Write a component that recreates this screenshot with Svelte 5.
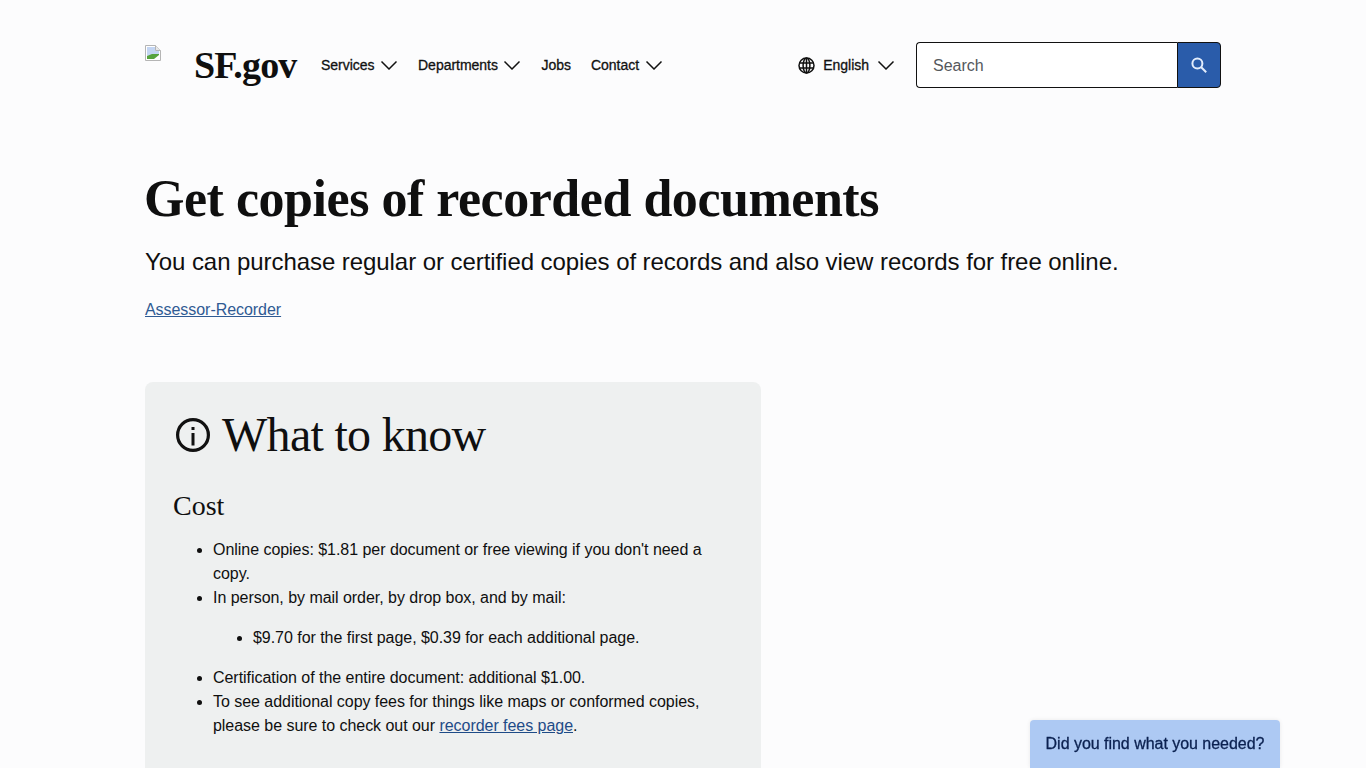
<script>
  const navItems = [
    { label: 'Services', caret: true },
    { label: 'Departments', caret: true },
    { label: 'Jobs', caret: false },
    { label: 'Contact', caret: true }
  ];
</script>

<div class="page">
  <header class="header">
    <a class="brand" href="#top">
      <span class="logo">
        <svg width="16" height="16" viewBox="0 0 16 16" aria-hidden="true">
          <path d="M0.5 0.5H10.5L15.5 5.5V15.5H0.5Z" fill="#fff" stroke="#b5b5b5" />
          <path d="M10.5 0.5V5.5H15.5" fill="#e8e8e8" stroke="#b5b5b5" />
          <path d="M2 2H10V6H14V9L2 11Z" fill="#c3d5f3" />
          <path d="M2 14V11L7 9L14 9V10L9 14Z" fill="#56a33e" />
        </svg>
      </span>
      <span class="wordmark">SF.gov</span>
    </a>
    <nav class="nav">
      {#each navItems as item}
        <a class="nav-item" href="#top">
          {item.label}
          {#if item.caret}
            <svg class="caret" width="18" height="10" viewBox="0 0 18 10" aria-hidden="true">
              <path d="M1.5 1.5L9 9L16.5 1.5" fill="none" stroke="#111" stroke-width="1.5" />
            </svg>
          {/if}
        </a>
      {/each}
    </nav>
    <div class="tools">
      <button class="lang" type="button">
        <svg width="17" height="17" viewBox="0 0 17 17" aria-hidden="true">
          <g fill="none" stroke="#111" stroke-width="1.5">
            <circle cx="8.5" cy="8.5" r="7.5" />
            <ellipse cx="8.5" cy="8.5" rx="3.4" ry="7.5" />
            <path d="M1 6H16M1 11H16M8.5 1V16" />
          </g>
        </svg>
        <span>English</span>
        <svg class="caret-lang" width="18" height="10" viewBox="0 0 18 10" aria-hidden="true">
          <path d="M1.5 1.5L9 9L16.5 1.5" fill="none" stroke="#111" stroke-width="1.5" />
        </svg>
      </button>
      <form class="search">
        <input class="search-input" type="text" placeholder="Search" />
        <button class="search-btn" type="button" aria-label="Search">
          <svg width="16" height="16" viewBox="0 0 16 16" aria-hidden="true">
            <circle cx="6.4" cy="6.4" r="5" fill="none" stroke="#e3edfc" stroke-width="2" />
            <path d="M10 10L15.2 15.2" stroke="#e3edfc" stroke-width="2" />
          </svg>
        </button>
      </form>
    </div>
  </header>

  <main class="main">
    <h1 class="title">Get copies of recorded documents</h1>
    <p class="lead">You can purchase regular or certified copies of records and also view records for free online.</p>
    <a class="dept" href="#top">Assessor-Recorder</a>

    <section class="card">
      <h2 class="card-title">
        <svg class="info" width="36" height="36" viewBox="0 0 36 36" aria-hidden="true">
          <circle cx="18" cy="18" r="15.4" fill="none" stroke="#111" stroke-width="3.2" />
          <rect x="16.5" y="16" width="3" height="12.5" fill="#111" />
          <rect x="16.5" y="10" width="3" height="3" fill="#111" />
        </svg>
        <span>What to know</span>
      </h2>
      <h3 class="card-sub">Cost</h3>
      <ul class="list">
        <li>Online copies: $1.81 per document or free viewing if you don't need a copy.</li>
        <li>In person, by mail order, by drop box, and by mail:
          <ul class="list nested">
            <li>$9.70 for the first page, $0.39 for each additional page.</li>
          </ul>
        </li>
        <li>Certification of the entire document: additional $1.00.</li>
        <li>To see additional copy fees for things like maps or conformed copies, please be sure to check out our <a href="#top">recorder fees page</a>.</li>
      </ul>
    </section>
  </main>

  <button class="feedback" type="button">Did you find what you needed?</button>
</div>

<style>
  :global(body) {
    margin: 0;
    background: #fcfcfd;
    color: #0f0f0f;
    font-family: "Liberation Sans", Arial, sans-serif;
  }
  :global(html) { overflow: hidden; }

  .page {
    width: 1076px;
    margin: 0 auto;
  }
  .header {
    display: flex;
    align-items: center;
    height: 130px;
    box-sizing: border-box;
  }
  .brand {
    display: flex;
    align-items: center;
    color: inherit;
    text-decoration: none;
    width: 176px;
  }
  .logo {
    width: 49px;
    height: 40px;
    flex: none;
  }
  .logo svg { display: block; }
  .wordmark {
    font-family: "Liberation Serif", "Times New Roman", serif;
    font-weight: 700;
    font-size: 38px;
    line-height: 44px;
    letter-spacing: -0.8px;
    white-space: nowrap;
  }
  .nav {
    display: flex;
    align-items: center;
    gap: 20px;
  }
  .nav-item, .lang {
    display: flex;
    align-items: center;
    gap: 5.5px;
    color: #111;
    text-decoration: none;
    font-size: 14px;
    letter-spacing: -0.02px;
    -webkit-text-stroke: 0.3px #111;
    white-space: nowrap;
  }
  .tools {
    margin-left: auto;
    display: flex;
    align-items: center;
    gap: 21px;
  }
  .lang {
    border: 0;
    background: none;
    padding: 0;
    font-family: inherit;
    gap: 0;
  }
  .lang span { margin-left: 8px; }
  .caret-lang { margin-left: 8px; }
  .search {
    display: flex;
    width: 305px;
    height: 46px;
    margin: 0;
  }
  .search-input {
    flex: 1;
    min-width: 0;
    box-sizing: border-box;
    border: 1px solid #111;
    border-right: 0;
    border-radius: 4px 0 0 4px;
    background: #fff;
    padding: 2px 16px 0;
    font: 16px "Liberation Sans", Arial, sans-serif;
    outline: none;
  }
  .search-input::placeholder { color: #55585d; opacity: 1; }
  .search-btn {
    width: 44px;
    box-sizing: border-box;
    border: 1px solid #111;
    border-radius: 0 4px 4px 0;
    background: #2a5caa;
    display: flex;
    align-items: center;
    justify-content: center;
    padding: 0;
  }

  .main { padding-top: 40px; }
  .title {
    margin: 0 0 0 -1px;
    font-family: "Liberation Serif", "Times New Roman", serif;
    font-weight: 700;
    font-size: 52px;
    line-height: 58px;
    letter-spacing: -0.47px;
    white-space: nowrap;
  }
  .lead {
    margin: 18px 0 0;
    font-size: 24px;
    line-height: 32px;
    letter-spacing: -0.065px;
  }
  .dept {
    display: block;
    width: max-content;
    margin-top: 20px;
    color: #2f5a93;
    font-size: 16px;
    line-height: 24px;
    letter-spacing: -0.05px;
  }
  .card {
    width: 616px;
    box-sizing: border-box;
    margin-top: 60px;
    padding: 24px 28px 40px;
    background: #eef0f0;
    border-radius: 8px;
  }
  .card-title {
    display: flex;
    align-items: center;
    gap: 11px;
    margin: 0;
    font-family: "Liberation Serif", "Times New Roman", serif;
    font-weight: 400;
    font-size: 48px;
    line-height: 58px;
    letter-spacing: -0.7px;
  }
  .info { margin-left: 2px; }
  .card-sub {
    margin: 24px 0 0;
    font-family: "Liberation Serif", "Times New Roman", serif;
    font-weight: 400;
    font-size: 28px;
    line-height: 36px;
  }
  .list {
    margin: 14px 0 16px;
    padding-left: 40px;
    font-size: 16px;
    line-height: 24px;
    letter-spacing: -0.04px;
    list-style: disc;
  }
  .nested { margin: 16px 0; }
  .list a { color: #1e4b87; }
  .feedback {
    position: fixed;
    right: 86px;
    bottom: 0;
    width: 250px;
    height: 48px;
    border: 0;
    border-radius: 4px 4px 0 0;
    background: #adc9f3;
    color: #0b2150;
    font: 16px "Liberation Sans", Arial, sans-serif;
    letter-spacing: -0.03px;
    -webkit-text-stroke: 0.3px #0b2150;
    box-shadow: 0 0 4px rgba(0,0,0,0.08);
    padding: 0;
  }
</style>
